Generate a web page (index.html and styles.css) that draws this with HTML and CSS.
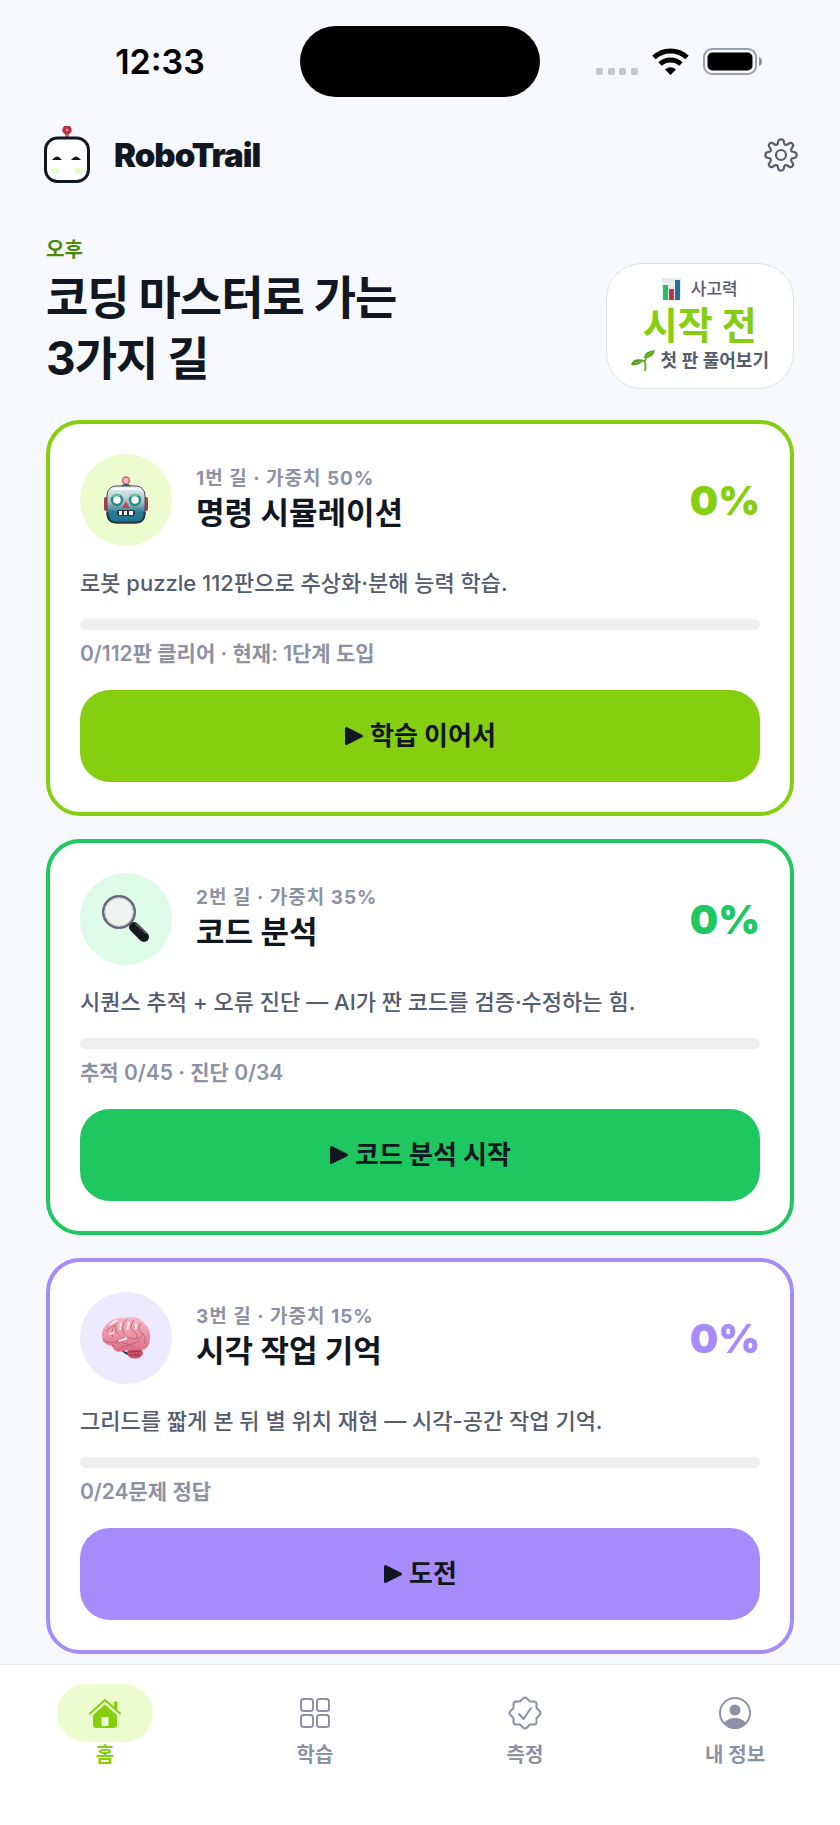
FILE: index.html
```html
<!DOCTYPE html>
<html lang="ko">
<head>
  <meta charset="UTF-8">
  <meta name="viewport" content="width=device-width, initial-scale=1.0">
  <title>RoboTrail</title>
  <link rel="stylesheet" href="styles.css">
</head>
<body>

  <!-- Status bar -->
  <div class="status-bar">
    <span class="clock">12:33</span>
    <div class="island"></div>
    <div class="status-icons">
      <svg class="signal" width="42" height="28" viewBox="0 0 42 28" fill="#c5c6cd">
        <rect x="0" y="20" width="7" height="7" rx="2"/>
        <rect x="12" y="20" width="7" height="7" rx="2"/>
        <rect x="23" y="20" width="7" height="7" rx="2"/>
        <rect x="35" y="20" width="7" height="7" rx="2"/>
      </svg>
      <svg width="37" height="28" viewBox="0 0 37 28">
        <path d="M2 9.500a24 24 0 0 1 33 0" fill="none" stroke="#000" stroke-width="5"/>
        <path d="M8 16a15.500 15.500 0 0 1 21 0" fill="none" stroke="#000" stroke-width="5"/>
        <path d="M13 21.500q5.500-4.500 11 0l-5.500 5.500z"/>
      </svg>
      <svg width="60" height="28" viewBox="0 0 60 28">
        <rect x="1" y="1" width="52" height="25" rx="8" fill="none" stroke="#9a9fae" stroke-width="2"/>
        <rect x="4.500" y="4.500" width="45" height="18" rx="5"/>
        <path d="M56 9q3 1.500 3 4.500t-3 4.500z" fill="#8a8d9a"/>
      </svg>
    </div>
  </div>

  <!-- Header -->
  <header class="app-header">
    <a class="brand" href="#">
      <svg width="46" height="58" viewBox="0 0 46 58">
        <path d="M23 6v7" stroke="#e0707c" stroke-width="4"/>
        <circle cx="23" cy="4" r="3" fill="#ef8f98" stroke="#b53440" stroke-width="3.500"/>
        <rect x="1.500" y="12" width="43" height="43.500" rx="12" fill="#fff" stroke="#111720" stroke-width="3"/>
        <path d="M8 34q5-7 10 0zM27 34q5-7 10 0z" fill="#111720"/>
        <rect x="7" y="42" width="9" height="6" rx="3" fill="#e8fccb"/>
        <rect x="30" y="42" width="9" height="6" rx="3" fill="#e8fccb"/>
      </svg>
      <span>RoboTrail</span>
    </a>
    <button class="settings" type="button" aria-label="설정">
      <svg width="34" height="34" viewBox="0 0 34 34" fill="none" stroke="#555c6e" stroke-width="2.200" stroke-linejoin="round">
        <path d="M14.500 2.500Q15 1.300 17 1.300T19.500 2.500L20.500 6.300Q21.500 7.300 23 6.800L26 4.900Q27.500 4.800 28.500 5.800T29.200 8L27.300 11Q26.700 12.500 27.800 13.500L31.500 14.500Q32.700 15.300 32.700 17T31.500 19.500L27.800 20.500Q26.700 21.500 27.300 23L29.200 26Q29.300 27.500 28.300 28.500T26 29.200L23 27.300Q21.500 26.700 20.500 27.800L19.500 31.500Q18.700 32.700 17 32.700T14.500 31.500L13.500 27.800Q12.500 26.700 11 27.300L8 29.200Q6.500 29.300 5.500 28.300T4.800 26L6.700 23Q7.300 21.500 6.200 20.500L2.500 19.500Q1.300 18.700 1.300 17T2.500 14.500L6.200 13.500Q7.300 12.500 6.700 11L4.800 8Q4.700 6.500 5.700 5.500T8 4.800L11 6.700Q12.500 7.300 13.500 6.200Z"/>
        <circle cx="17" cy="17" r="5"/>
      </svg>
    </button>
  </header>

  <main>
    <section class="hero">
      <div>
        <p class="eyebrow">오후</p>
        <h1>코딩 마스터로 가는<br>3가지 길</h1>
      </div>
      <div class="score">
        <div class="score-label">
          <svg width="19" height="22" viewBox="0 0 19 22">
            <path d="M0 0h19v22H0z" fill="#e6e9ee"/>
            <path d="M0 5.500h19M0 11h19M0 16.500h19" stroke="#fff"/>
            <path d="M1 7h5v15H1z" fill="#24c062"/>
            <path d="M7 11h5v11H7z" fill="#b5384c"/>
            <path d="M13 2h5v20h-5z" fill="#23709b"/>
          </svg>
          <span>사고력</span>
        </div>
        <div class="score-value">시작 전</div>
        <div class="score-hint">
          <svg width="24" height="22" viewBox="0 0 24 22">
            <path d="M14 21q1.500-7-1.500-11M14 13q0-5 3-7" fill="none" stroke="#6eb62d" stroke-width="2"/>
            <path d="M0 15Q2 7 13 10Q9 16 0 15z" fill="#4d9a1d"/>
            <path d="M13 8Q13 1 24 0Q22 9 13 8z" fill="#58a820"/>
            <path d="M3 13l8-2M15 7l6-5" stroke="#8fce4b"/>
          </svg>
          <span>첫 판 풀어보기</span>
        </div>
      </div>
    </section>

    <!-- Learning paths -->
    <div class="paths">
      <article class="card card-lime">
        <div class="card-head">
          <div class="badge">
            <svg width="46" height="48" viewBox="0 0 46 48">
              <defs>
                <linearGradient id="robot-face" x1="0" y1="0" x2="0" y2="1">
                  <stop offset="0" stop-color="#e9f3f3"/>
                  <stop offset="0.450" stop-color="#a9bcc2"/>
                  <stop offset="0.700" stop-color="#267d97"/>
                  <stop offset="1" stop-color="#1e718e"/>
                </linearGradient>
              </defs>
              <circle cx="23" cy="4.500" r="3.500" fill="#f7bdbc" stroke="#d85a76" stroke-width="1.500"/>
              <path d="M17 12q1-4 6-4t6 4z" fill="#454b5d"/>
              <rect x="1" y="21" width="5" height="14" rx="2" fill="#b8374a"/>
              <rect x="40" y="21" width="5" height="14" rx="2" fill="#b8374a"/>
              <rect x="4" y="10" width="38" height="37" rx="9" fill="url(#robot-face)" stroke="#45515d"/>
              <path d="M4.500 36v2q0 8.500 9 8.500h19q9 0 9-8.500v-2" fill="none" stroke="#29353f" stroke-width="2"/>
              <path d="M8 13h30" stroke="#f6ffff" stroke-width="2"/>
              <circle cx="14" cy="24" r="5" fill="#fff" stroke="#218b88" stroke-width="2.500"/>
              <circle cx="32" cy="24" r="5" fill="#fff" stroke="#218b88" stroke-width="2.500"/>
              <path d="M10 21q3-4 7-1M28 21q3-4 7-1" fill="none" stroke="#58d1a0" stroke-width="2"/>
              <path d="M23 25l3.500 7h-7z" fill="#c83e4c"/>
              <rect x="14" y="34" width="18" height="6" rx="2.500" fill="#303743"/>
              <path d="M16 35h3v4h-3zM21 35h3v4h-3zM26 35h4v4h-4z" fill="#fff"/>
            </svg>
          </div>
          <div class="card-title">
            <p class="meta">1번 길 · 가중치 50%</p>
            <h2>명령 시뮬레이션</h2>
          </div>
          <span class="percent">0%</span>
        </div>
        <p class="desc">로봇 puzzle 112판으로 추상화·분해 능력 학습.</p>
        <div class="track"></div>
        <p class="progress-text">0/112판 클리어 · 현재: 1단계 도입</p>
        <button class="start" type="button">
          <svg width="20" height="20" viewBox="0 0 20 20"><path d="M2.500 2.500l15 7.500-15 7.500z" fill="#111720" stroke="#111720" stroke-width="3" stroke-linejoin="round"/></svg>
          <span>학습 이어서</span>
        </button>
      </article>

      <article class="card card-green">
        <div class="card-head">
          <div class="badge">
            <svg width="50" height="50" viewBox="0 0 50 50">
              <path d="M31 30l4 4" stroke="#8c8f9b" stroke-width="5"/>
              <path d="M33 33l10 10" stroke="#15181e" stroke-width="10" stroke-linecap="round"/>
              <path d="M35 30l10 9" stroke="#51545d" stroke-width="2" stroke-linecap="round"/>
              <circle cx="18" cy="18" r="15.500" fill="#eef3ef" stroke="#656477" stroke-width="3"/>
              <circle cx="18" cy="18" r="14.500" fill="none" stroke="#c4c5ce"/>
            </svg>
          </div>
          <div class="card-title">
            <p class="meta">2번 길 · 가중치 35%</p>
            <h2>코드 분석</h2>
          </div>
          <span class="percent">0%</span>
        </div>
        <p class="desc">시퀀스 추적 + 오류 진단 — AI가 짠 코드를 검증·수정하는 힘.</p>
        <div class="track"></div>
        <p class="progress-text">추적 0/45 · 진단 0/34</p>
        <button class="start" type="button">
          <svg width="20" height="20" viewBox="0 0 20 20"><path d="M2.500 2.500l15 7.500-15 7.500z" fill="#111720" stroke="#111720" stroke-width="3" stroke-linejoin="round"/></svg>
          <span>코드 분석 시작</span>
        </button>
      </article>

      <article class="card card-purple">
        <div class="card-head">
          <div class="badge">
            <svg width="50" height="44" viewBox="0 0 50 44">
              <defs>
                <linearGradient id="brain-fill" x1="0" y1="0" x2="0" y2="1">
                  <stop offset="0" stop-color="#f7bac8"/>
                  <stop offset="1" stop-color="#dd6c83"/>
                </linearGradient>
              </defs>
              <path d="M19 33q6 5 12 2l-1 5q-6-1-11-7z" fill="#292b31"/>
              <ellipse cx="34" cy="37" rx="8" ry="5.500" fill="#c8526a"/>
              <path d="M28 36l12-1M28 39l11 0" stroke="#94364c"/>
              <path d="M1 21Q0 13 7 7Q13 1 24 2Q35-1 42 6Q50 12 49 23Q49 32 41 34Q31 33 23 35Q14 38 11 30Q2 29 1 21z" fill="url(#brain-fill)"/>
              <path d="M2 23q7 6 14 2q7-6 16-2q9 0 10-6M11 30q5-5 12-3q8 4 16-3M5 15q5-5 9-6q-5 7-2 12M17 5q-5 7 0 13M26 3q-7 7-3 15M33 4q-6 8 0 12q5 2 2 7M40 7q-5 7 1 10q5 4 2 11M20 32q7-5 14 0" fill="none" stroke="#c9607a"/>
              <path d="M9 9q4-4 8-4M20 7l-1 7M28 6l-2 8M35 7v6M8 18l5-1M18 25l8-3" fill="none" stroke="#fde6ed" stroke-width="2"/>
            </svg>
          </div>
          <div class="card-title">
            <p class="meta">3번 길 · 가중치 15%</p>
            <h2>시각 작업 기억</h2>
          </div>
          <span class="percent">0%</span>
        </div>
        <p class="desc">그리드를 짧게 본 뒤 별 위치 재현 — 시각-공간 작업 기억.</p>
        <div class="track"></div>
        <p class="progress-text">0/24문제 정답</p>
        <button class="start" type="button">
          <svg width="20" height="20" viewBox="0 0 20 20"><path d="M2.500 2.500l15 7.500-15 7.500z" fill="#111720" stroke="#111720" stroke-width="3" stroke-linejoin="round"/></svg>
          <span>도전</span>
        </button>
      </article>
    </div>
  </main>

  <!-- Bottom tabs -->
  <nav class="tabs">
    <a class="tab active" href="#">
      <span class="tab-icon">
        <svg width="34" height="34" viewBox="0 0 34 34">
          <path d="M2 17.500L17 4l15 13.500" fill="none" stroke="#86ce10" stroke-width="2" stroke-linecap="round" stroke-linejoin="round"/>
          <path d="M26.500 6h2.500v7l-2.500-2z" fill="#86ce10" stroke="#86ce10" stroke-linejoin="round"/>
          <path fill-rule="evenodd" d="M5 19L17 8.500 29 19v10q0 3-3 3H8q-3 0-3-3zM13.500 21v9h7v-9z" fill="#86ce10"/>
        </svg>
      </span>
      <span>홈</span>
    </a>
    <a class="tab" href="#">
      <span class="tab-icon">
        <svg width="34" height="34" viewBox="0 0 34 34" fill="none" stroke="#8c92a3" stroke-width="2">
          <rect x="3" y="3" width="12" height="12" rx="2.500"/>
          <rect x="19" y="3" width="12" height="12" rx="2.500"/>
          <rect x="3" y="19" width="12" height="12" rx="2.500"/>
          <rect x="19" y="19" width="12" height="12" rx="2.500"/>
        </svg>
      </span>
      <span>학습</span>
    </a>
    <a class="tab" href="#">
      <span class="tab-icon">
        <svg width="34" height="34" viewBox="0 0 34 34" fill="none" stroke="#8c92a3" stroke-width="2" stroke-linecap="round" stroke-linejoin="round">
          <path d="M15 2.500Q17 0.500 19 2.500L22 5.500H26Q28.500 5.500 28.500 8V12L31.500 15Q33.500 17 31.500 19L28.500 22V26Q28.500 28.500 26 28.500H22L19 31.500Q17 33.500 15 31.500L12 28.500H8Q5.500 28.500 5.500 26V22L2.500 19Q0.500 17 2.500 15L5.500 12V8Q5.500 5.500 8 5.500H12Z"/>
          <path d="M11 18l4.500 5L23 12"/>
        </svg>
      </span>
      <span>측정</span>
    </a>
    <a class="tab" href="#">
      <span class="tab-icon">
        <svg width="34" height="34" viewBox="0 0 34 34">
          <circle cx="17" cy="17" r="15" fill="none" stroke="#8c92a3" stroke-width="2"/>
          <circle cx="17" cy="14" r="5.500" fill="#8c92a3"/>
          <path d="M6 27q4-5 11-5t11 5q-4 6-11 6T6 27z" fill="#8c92a3"/>
        </svg>
      </span>
      <span>내 정보</span>
    </a>
  </nav>

</body>
</html>
```
FILE: styles.css
```css
* {
  box-sizing: border-box;
}

body {
  margin: 0;
  min-height: 100vh;
  display: flex;
  flex-direction: column;
  background: #f7f8fb;
  color: #111720;
  font-family: Inter, "Noto Sans CJK KR", sans-serif;
}

h1, h2, p {
  margin: 0;
}

a {
  color: inherit;
  text-decoration: none;
}

button {
  border: none;
  padding: 0;
  font-family: inherit;
  color: inherit;
  cursor: pointer;
}

svg {
  display: block;
  flex: none;
}

/* Status bar */
.status-bar {
  display: grid;
  grid-template-columns: 1fr auto 1fr;
  align-items: center;
  padding-top: 26px;
}

.clock {
  padding-left: 20px;
  text-align: center;
  font-size: 34px;
  font-weight: 600;
  color: #000;
}

.island {
  width: 240px;
  height: 71px;
  border-radius: 36px;
  background: #000;
}

.status-icons {
  display: flex;
  justify-content: center;
  gap: 14px;
  padding-right: 22px;
}

/* Header */
.app-header {
  display: flex;
  justify-content: space-between;
  align-items: center;
  padding: 29px 42px 53px 44px;
}

.brand {
  display: flex;
  align-items: center;
  gap: 24px;
  font-size: 33px;
  line-height: 58px;
  font-weight: 900;
  letter-spacing: -1px;
}

.settings {
  background: none;
}

/* Hero */
main {
  padding: 0 46px 10px;
}

.hero {
  display: flex;
  justify-content: space-between;
  align-items: flex-end;
  margin-bottom: 31px;
}

.eyebrow {
  margin-bottom: 4px;
  font-size: 20px;
  line-height: 26px;
  font-weight: 600;
  color: #4a8a0a;
}

h1 {
  font-size: 46px;
  line-height: 61px;
  font-weight: 700;
  letter-spacing: -1px;
}

.score {
  padding: 13px 24px 15px;
  border: 1px solid #dfe1e6;
  border-radius: 36px;
  background: #fff;
  color: #555c6e;
  font-weight: 500;
}

.score-label,
.score-hint {
  display: flex;
  justify-content: center;
  align-items: center;
  gap: 6px;
  font-size: 18px;
  line-height: 24px;
}

.score-label {
  gap: 10px;
  font-size: 17px;
}

.score-hint {
  font-weight: 600;
}

.score-value {
  text-align: center;
  font-size: 38px;
  line-height: 48px;
  font-weight: 700;
  color: #86ce10;
}

/* Cards */
.paths {
  display: flex;
  flex-direction: column;
  gap: 23px;
}

.card {
  padding: 30px;
  border: 4px solid var(--accent);
  border-radius: 34px;
  background: #fff;
}

.card-lime {
  --accent: #86ce10;
  --soft: #ecfccf;
}

.card-green {
  --accent: #1ec75f;
  --soft: #defbe9;
}

.card-purple {
  --accent: #a68cfb;
  --soft: #ede9fe;
}

.card-head {
  display: flex;
  align-items: center;
  gap: 24px;
}

.badge {
  display: flex;
  justify-content: center;
  align-items: center;
  width: 92px;
  height: 92px;
  border-radius: 50%;
  background: var(--soft);
}

.card-title {
  flex: 1;
}

.meta {
  font-size: 19px;
  line-height: 26px;
  font-weight: 700;
  letter-spacing: 1px;
  color: #8c92a3;
}

h2 {
  font-size: 31px;
  line-height: 42px;
  font-weight: 700;
}

.percent {
  font-size: 40px;
  font-weight: 900;
  color: var(--accent);
}

.desc {
  margin: 20px 0 19px;
  font-size: 22px;
  line-height: 34px;
  font-weight: 500;
  color: #555c6e;
}

.track {
  height: 11px;
  border-radius: 6px;
  background: #eee;
}

.progress-text {
  margin: 9px 0 21px;
  font-size: 21px;
  line-height: 30px;
  font-weight: 600;
  color: #8c92a3;
}

.start {
  display: flex;
  justify-content: center;
  align-items: center;
  gap: 6px;
  width: 100%;
  height: 92px;
  border-radius: 30px;
  background: var(--accent);
  font-size: 26px;
  line-height: 30px;
  font-weight: 700;
}

/* Bottom tabs */
.tabs {
  display: grid;
  grid-template-columns: repeat(4, 1fr);
  margin-top: auto;
  padding: 19px 0 57px;
  border-top: 1px solid #e5e7eb;
  background: #fff;
}

.tab {
  display: flex;
  flex-direction: column;
  align-items: center;
  font-size: 20px;
  line-height: 26px;
  font-weight: 600;
  color: #8c92a3;
}

.tab-icon {
  display: flex;
  justify-content: center;
  align-items: center;
  width: 96px;
  height: 58px;
  border-radius: 29px;
}

.active {
  color: #86ce10;
}

.active .tab-icon {
  background: #ecfccf;
}
```
